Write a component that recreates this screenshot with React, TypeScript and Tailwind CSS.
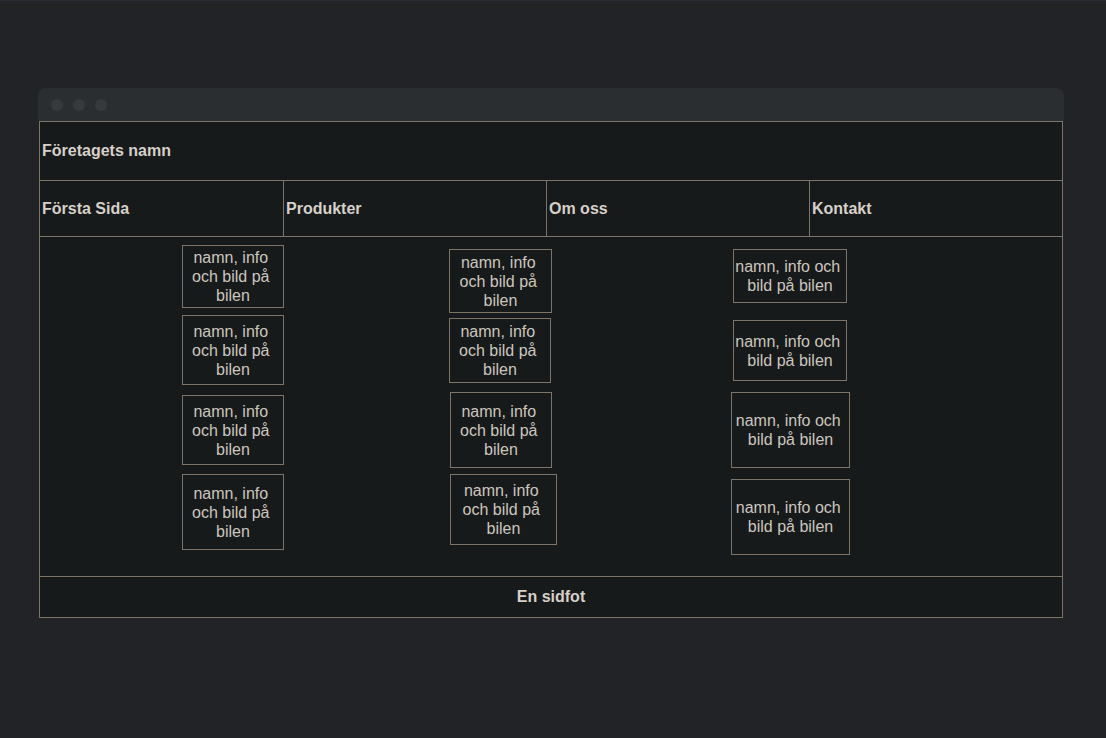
const font = { fontFamily: '"Liberation Sans", Arial, sans-serif' };

type Box = { w: string; h: string; mt: string; ml: string };

const columns: { ml: string; w: string; boxes: Box[] }[] = [
  {
    ml: 'ml-[142px]',
    w: 'w-[102px]',
    boxes: [
      { w: 'w-[102px]', h: 'h-[63px]', mt: 'mt-[8px]', ml: 'ml-0' },
      { w: 'w-[102px]', h: 'h-[70px]', mt: 'mt-[7px]', ml: 'ml-0' },
      { w: 'w-[102px]', h: 'h-[70px]', mt: 'mt-[10px]', ml: 'ml-0' },
      { w: 'w-[102px]', h: 'h-[76px]', mt: 'mt-[9px]', ml: 'ml-0' },
    ],
  },
  {
    ml: 'ml-[165px]',
    w: 'w-[108px]',
    boxes: [
      { w: 'w-[103px]', h: 'h-[64px]', mt: 'mt-[12px]', ml: 'ml-0' },
      { w: 'w-[102px]', h: 'h-[65px]', mt: 'mt-[5px]', ml: 'ml-0' },
      { w: 'w-[102px]', h: 'h-[76px]', mt: 'mt-[9px]', ml: 'ml-px' },
      { w: 'w-[107px]', h: 'h-[71px]', mt: 'mt-[6px]', ml: 'ml-px' },
    ],
  },
  {
    ml: 'ml-[174px]',
    w: 'w-[119px]',
    boxes: [
      { w: 'w-[114px]', h: 'h-[54px]', mt: 'mt-[12px]', ml: 'ml-[2px]' },
      { w: 'w-[114px]', h: 'h-[61px]', mt: 'mt-[17px]', ml: 'ml-[2px]' },
      { w: 'w-[119px]', h: 'h-[76px]', mt: 'mt-[11px]', ml: 'ml-0' },
      { w: 'w-[119px]', h: 'h-[76px]', mt: 'mt-[11px]', ml: 'ml-0' },
    ],
  },
];

const nav = [
  { label: 'Första Sida', w: 'w-[244px]' },
  { label: 'Produkter', w: 'w-[263px]' },
  { label: 'Om oss', w: 'w-[263px]' },
  { label: 'Kontakt', w: 'flex-1' },
];

export default function App() {
  return (
    <div className="min-h-[738px] bg-[#222327] border-t border-[#262a33] pt-[87px]" style={font}>
      <div className="ml-[38px] w-[1026px]">
        <div className="h-[33px] bg-[#2a2e31] rounded-t-lg flex items-center gap-[10px] pl-[13px]">
          <span className="w-3 h-3 rounded-full bg-[#363a3d]" />
          <span className="w-3 h-3 rounded-full bg-[#363a3d]" />
          <span className="w-3 h-3 rounded-full bg-[#363a3d]" />
        </div>

        <div className="ml-px w-[1024px] border border-[#7d7366] bg-[#171a1b] text-[#d6d0c8]">
          <div className="h-[58px] flex items-center pl-[2px] text-base font-bold">
            Företagets namn
          </div>

          <div className="flex h-[56px] border-t border-[#7d7366]">
            {nav.map((n, i) => (
              <div
                key={n.label}
                className={`${n.w} flex items-center pl-[2px] text-base font-bold ${
                  i < nav.length - 1 ? 'border-r border-[#7d7366]' : ''
                }`}
              >
                {n.label}
              </div>
            ))}
          </div>

          <div className="flex h-[340px] border-t border-[#7d7366]">
            {columns.map((col, ci) => (
              <div key={ci} className={`${col.ml} ${col.w} flex flex-col shrink-0`}>
                {col.boxes.map((b, bi) => (
                  <div
                    key={bi}
                    className={`${b.w} ${b.h} ${b.mt} ${b.ml} border border-[#7d7366] px-px flex items-center justify-center text-center text-base leading-[19px] text-[#ccc6be] whitespace-break-spaces`}
                  >
                    namn, info och bild på bilen
                  </div>
                ))}
              </div>
            ))}
          </div>

          <div className="h-[41px] border-t border-[#7d7366] flex items-center justify-center text-base font-bold">
            En sidfot
          </div>
        </div>
      </div>
    </div>
  );
}
